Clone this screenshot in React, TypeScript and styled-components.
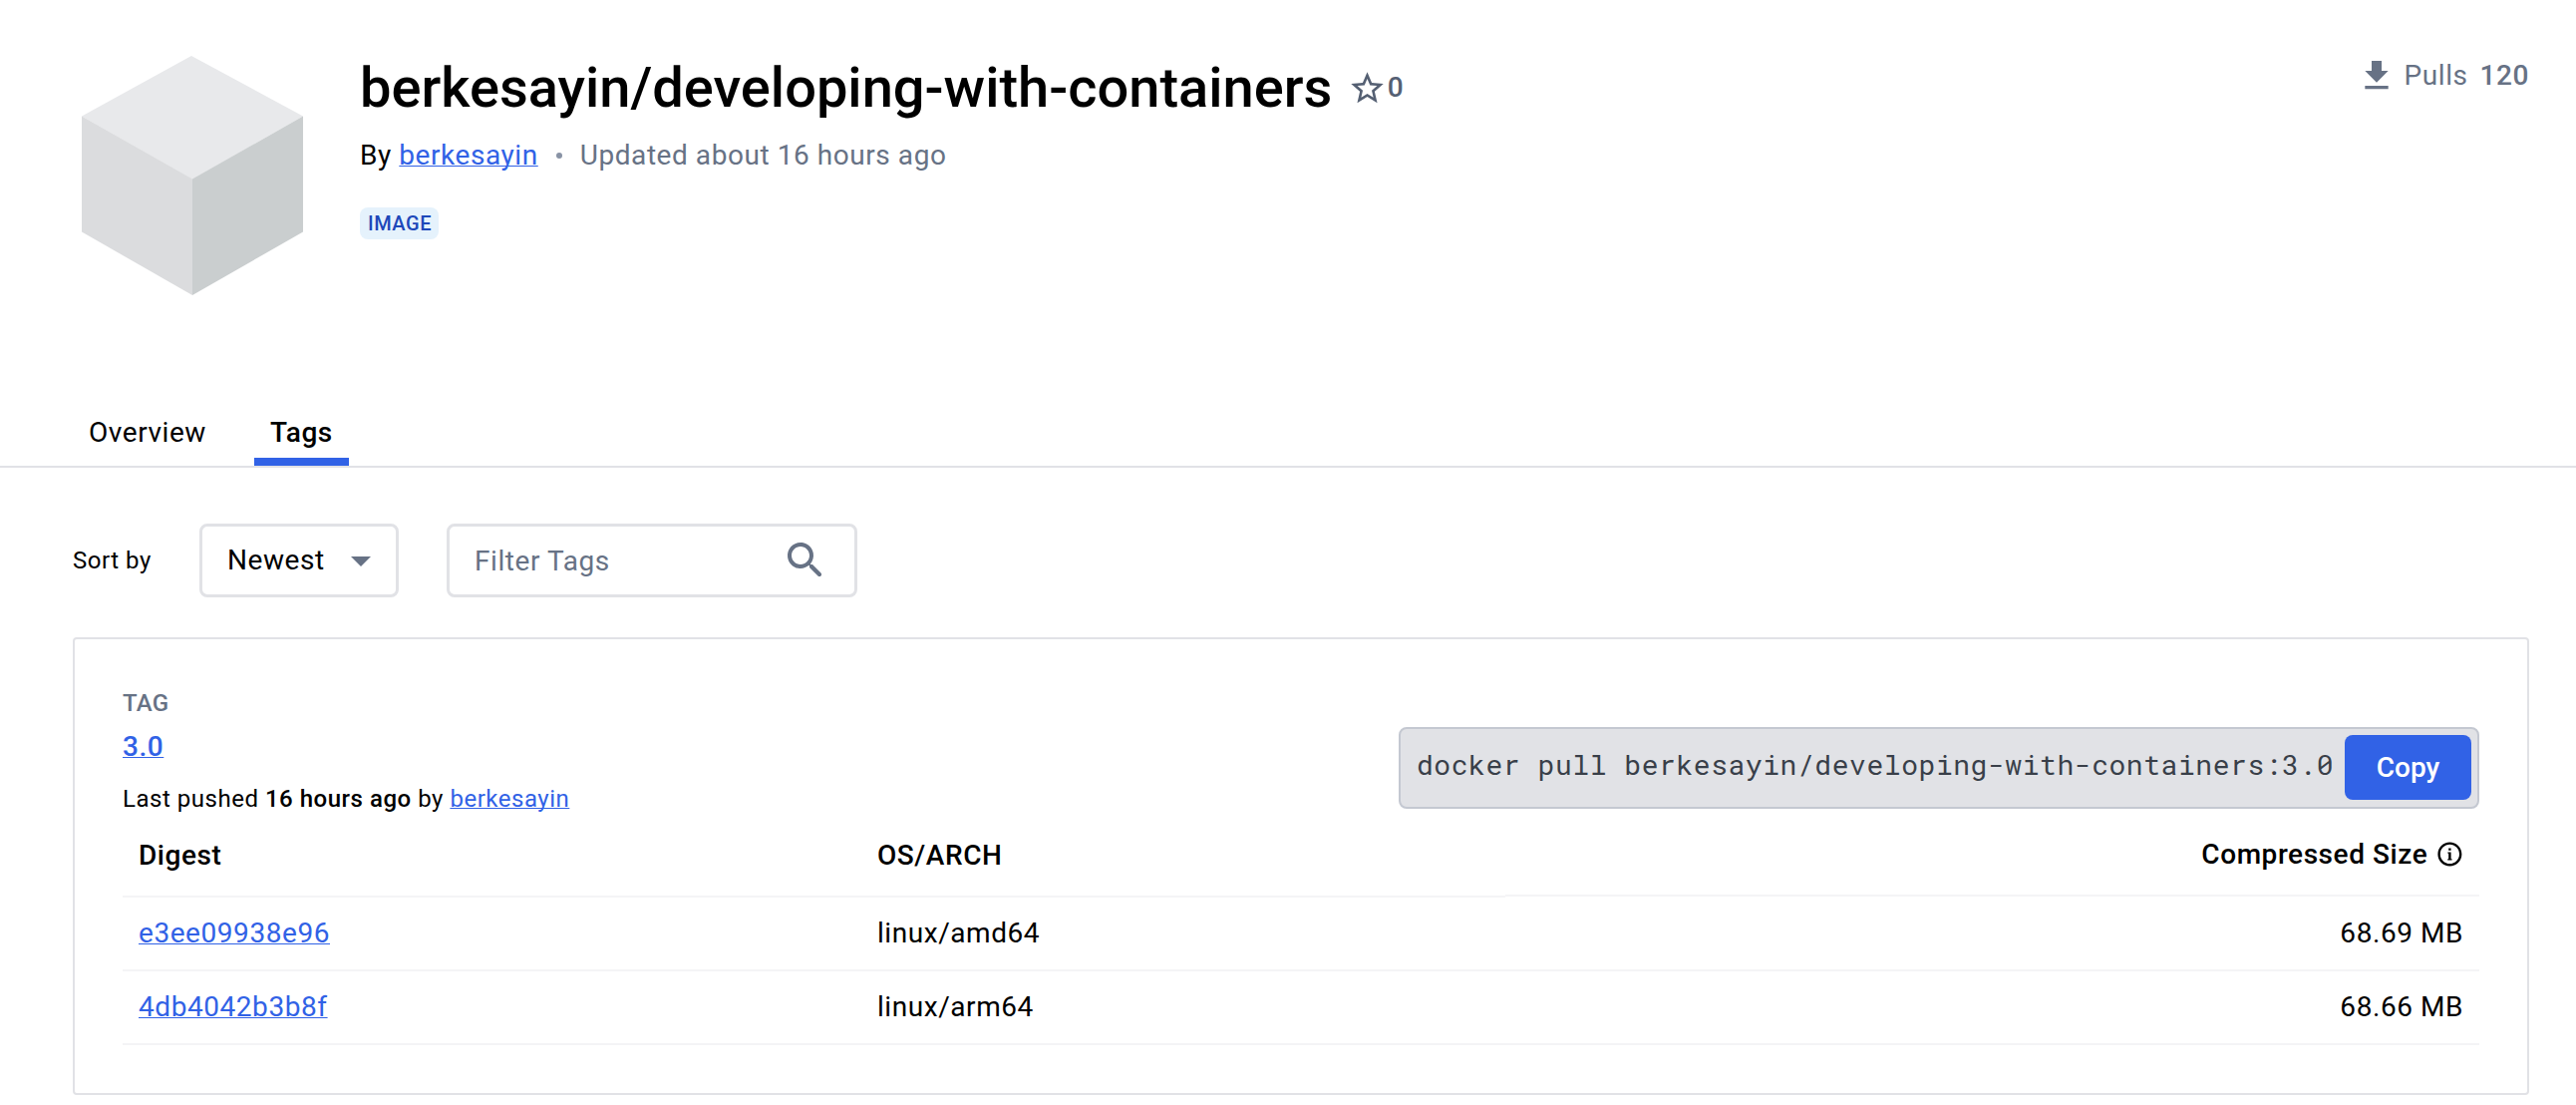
import React from "react";
import styled, { createGlobalStyle } from "styled-components";

const color = {
  text: "#000000",
  muted: "#677285",
  star: "#556073",
  link: "#3162e6",
  border: "#e1e2e6",
  rowBorder: "#f4f4f6",
};

const GlobalStyle = createGlobalStyle`
  * { box-sizing: border-box; }
  body {
    margin: 0;
    background: #fff;
    color: ${color.text};
    font-family: Roboto, "Liberation Sans", sans-serif;
    font-size: 28px;
    letter-spacing: 0.56px;
  }
`;

const Page = styled.div`
  height: 1108px;
  overflow: hidden;
`;

const Header = styled.header`
  display: flex;
  align-items: flex-start;
  height: 400px;
  padding: 56px 47px 0 82px;
`;

const CubeLogo = styled.svg`
  display: block;
  width: 222px;
  height: 240px;
  margin-right: 57px;
  flex: none;
`;

const Summary = styled.div`
  flex: 1;
`;

const TitleRow = styled.div`
  display: flex;
  align-items: center;
  height: 64px;
`;

const Title = styled.h1`
  margin: 0;
  font-size: 56px;
  font-weight: 500;
  line-height: 64px;
  letter-spacing: 0;
`;

const Stars = styled.div`
  display: flex;
  align-items: center;
  margin-left: 16px;
  color: ${color.star};
  font-weight: 500;
  line-height: 45px;
`;

const StarCount = styled.span`
  margin: -1px 0 0 0.5px;
`;

const Icon = styled.svg<{ $size: number }>`
  display: block;
  flex: none;
  width: ${(p) => p.$size}px;
  height: ${(p) => p.$size}px;
  fill: currentColor;
`;

const Link = styled.a`
  color: ${color.link};
  text-decoration: underline;
  text-decoration-thickness: 1px;
  text-underline-offset: 1px;
  text-decoration-skip-ink: none;
`;

const Byline = styled.div`
  display: flex;
  align-items: center;
  margin-top: 13px;
  line-height: 45px;
  white-space: pre;
`;

const Dot = styled.span`
  width: 6px;
  height: 6px;
  margin: 0 18px;
  border-radius: 50%;
  background: #8993a5;
`;

const Muted = styled.span`
  color: ${color.muted};
`;

const Badge = styled.span`
  display: block;
  width: 79px;
  margin-top: 30px;
  padding-left: 1px;
  border-radius: 8px;
  background: #e5f2fc;
  color: #1d48ba;
  font-size: 20px;
  font-weight: 500;
  line-height: 32px;
  text-align: center;
`;

const Pulls = styled.div`
  display: flex;
  align-items: center;
  height: 40px;
  color: ${color.muted};
`;

const PullsLabel = styled.span`
  margin: -1px 12px 0 8px;
`;

const PullsCount = styled.span`
  margin-top: -1px;
  font-weight: 500;
`;

const Tabs = styled.nav`
  display: flex;
  gap: 32px;
  height: 69px;
  padding-left: 73px;
  border-bottom: 2px solid ${color.border};
`;

const Tab = styled.div<{ $active?: boolean }>`
  height: 67px;
  padding: 8px 16px 0;
  border-bottom: 8px solid ${(p) => (p.$active ? color.link : "transparent")};
  font-weight: ${(p) => (p.$active ? 500 : 400)};
  line-height: 51px;
`;

const Toolbar = styled.div`
  display: flex;
  align-items: center;
  margin: 56px 0 40px 73px;
`;

const SortLabel = styled.span`
  width: 127px;
  font-size: 24px;
  letter-spacing: 0.52px;
`;

const Field = styled.div<{ $width: number; $end: number }>`
  display: flex;
  align-items: center;
  justify-content: space-between;
  width: ${(p) => p.$width}px;
  height: 74px;
  margin-right: 48px;
  padding: 0 ${(p) => p.$end}px 0 25px;
  border: 3px solid ${color.border};
  border-radius: 8px;
`;

const SelectValue = styled.span`
  padding-bottom: 2px;
`;

const FieldIcon = styled(Icon)`
  color: ${color.muted};
`;

const Card = styled.section`
  margin: 0 47px 0 73px;
  padding: 0 48px 48px;
  border: 2px solid ${color.border};
  border-radius: 4px;
`;

const CardTop = styled.div`
  display: flex;
  justify-content: space-between;
  height: 176px;
`;

const TagInfo = styled.div`
  padding-top: 46px;
`;

const TagLabel = styled.div`
  color: ${color.muted};
  font-size: 24px;
  font-weight: 500;
  letter-spacing: 0.24px;
  line-height: 36px;
`;

const TagName = styled.div`
  margin-top: 4px;
  font-weight: 500;
  line-height: 44px;
`;

const Pushed = styled.div`
  margin-top: 12px;
  font-size: 24px;
  letter-spacing: 0.52px;
  line-height: 36px;
`;

const Strong = styled.strong`
  font-weight: 500;
`;

const CommandBox = styled.div`
  display: flex;
  justify-content: space-between;
  width: 1084px;
  height: 82px;
  margin-top: 88px;
  padding: 6px 6px 6px 16px;
  border: 2px solid #c4c8d1;
  border-radius: 8px;
  background: #e1e2e6;
`;

const Command = styled.code`
  color: #393f49;
  font-family: "Roboto Mono", "DejaVu Sans Mono", monospace;
  font-size: 28px;
  line-height: 59px;
  white-space: nowrap;
`;

const CopyButton = styled.button`
  width: 127px;
  height: 65px;
  padding: 0;
  border: 0;
  border-radius: 8px;
  background: ${color.link};
  color: #fff;
  font: 500 28px/65px Roboto, "Liberation Sans", sans-serif;
  letter-spacing: 0;
`;

const Table = styled.div`
  display: grid;
  grid-template-columns: 741px 646px 1fr;
`;

const Cell = styled.div<{ $end?: boolean }>`
  display: flex;
  align-items: center;
  justify-content: ${(p) => (p.$end ? "flex-end" : "flex-start")};
  height: 74px;
  padding: 0 16px 1px;
  border-bottom: 2px solid ${color.rowBorder};
`;

const HeadCell = styled(Cell)`
  height: ${(p) => (p.$end ? 82 : 83)}px;
  padding: ${(p) => (p.$end ? "0 15px 1px 16px" : "0 16px")};
  gap: 8px;
  font-weight: 500;
`;

const rows = [
  { digest: "e3ee09938e96", arch: "linux/amd64", size: "68.69 MB" },
  { digest: "4db4042b3b8f", arch: "linux/arm64", size: "68.66 MB" },
];

export default function App() {
  return (
    <Page>
      <GlobalStyle />
      <Header>
        <CubeLogo viewBox="0 0 222 240">
          <path d="M110 0 222 60.500 111 124 0 60.500Z" fill="#e8e9eb" />
          <path d="M0 60.500 111 123.500V240L0 176.500Z" fill="#dbdcde" />
          <path d="M222 60.500 111 123.500V240L222 176.500Z" fill="#cacecf" />
        </CubeLogo>
        <Summary>
          <TitleRow>
            <Title>berkesayin/developing-with-containers</Title>
            <Stars>
              <Icon $size={39} viewBox="0 0 24 24">
                <path d="M22 9.24l-7.19-.62L12 2 9.19 8.63 2 9.24l5.46 4.73L5.82 21 12 17.27 18.18 21l-1.63-7.03L22 9.24zM12 15.4l-3.760 2.270 1-4.280-3.320-2.880 4.380-.380L12 6.100l1.710 4.040 4.380.380-3.320 2.880 1 4.280L12 15.400z" />
              </Icon>
              <StarCount>0</StarCount>
            </Stars>
          </TitleRow>
          <Byline>
            <span>By </span>
            <Link>berkesayin</Link>
            <Dot />
            <Muted>Updated about 16 hours ago</Muted>
          </Byline>
          <Badge>IMAGE</Badge>
        </Summary>
        <Pulls>
          <Icon $size={40} viewBox="0 0 24 24">
            <path d="M19 9h-4V3H9v6H5l7 7 7-7zM5 18v2h14v-2H5z" />
          </Icon>
          <PullsLabel>Pulls</PullsLabel>
          <PullsCount>120</PullsCount>
        </Pulls>
      </Header>

      <Tabs>
        <Tab>Overview</Tab>
        <Tab $active>Tags</Tab>
      </Tabs>

      <Toolbar>
        <SortLabel>Sort by</SortLabel>
        <Field $width={200} $end={11}>
          <SelectValue>Newest</SelectValue>
          <FieldIcon $size={48} viewBox="0 0 24 24">
            <path d="M7 10l5 5 5-5z" />
          </FieldIcon>
        </Field>
        <Field $width={412} $end={25}>
          <Muted>Filter Tags</Muted>
          <FieldIcon $size={48} viewBox="0 0 24 24">
            <path d="M15.500 14h-.790l-.280-.270c1.200-1.400 1.820-3.310 1.480-5.340-.470-2.780-2.790-5-5.590-5.340-4.230-.520-7.790 3.040-7.270 7.270.340 2.800 2.560 5.120 5.340 5.590 2.030.340 3.940-.280 5.340-1.480l.270.280v.790l4.250 4.250c.410.410 1.080.410 1.490 0 .410-.410.410-1.080 0-1.490L15.500 14zm-6 0C7.010 14 5 11.990 5 9.500S7.010 5 9.500 5 14 7.010 14 9.500 11.990 14 9.500 14z" />
          </FieldIcon>
        </Field>
      </Toolbar>

      <Card>
        <CardTop>
          <TagInfo>
            <TagLabel>TAG</TagLabel>
            <TagName>
              <Link>3.0</Link>
            </TagName>
            <Pushed>
              Last pushed <Strong>16 hours ago</Strong> by <Link>berkesayin</Link>
            </Pushed>
          </TagInfo>
          <CommandBox>
            <Command>docker pull berkesayin/developing-with-containers:3.0</Command>
            <CopyButton>Copy</CopyButton>
          </CommandBox>
        </CardTop>
        <Table>
          <HeadCell>Digest</HeadCell>
          <HeadCell>OS/ARCH</HeadCell>
          <HeadCell $end>
            <span>Compressed Size</span>
            <Icon $size={28.8} viewBox="0 0 24 24">
              <path d="M12 2C6.480 2 2 6.480 2 12s4.480 10 10 10 10-4.480 10-10S17.520 2 12 2zm0 18c-4.410 0-8-3.590-8-8s3.590-8 8-8 8 3.590 8 8-3.590 8-8 8z" />
              <path d="M11 7h2v2h-2zM10.300 10.500H13V16h.8v1h-3.600v-1H11v-4.500h-.7z" />
            </Icon>
          </HeadCell>
          {rows.map((row) => (
            <React.Fragment key={row.digest}>
              <Cell>
                <Link>{row.digest}</Link>
              </Cell>
              <Cell>{row.arch}</Cell>
              <Cell $end>{row.size}</Cell>
            </React.Fragment>
          ))}
        </Table>
      </Card>
    </Page>
  );
}
